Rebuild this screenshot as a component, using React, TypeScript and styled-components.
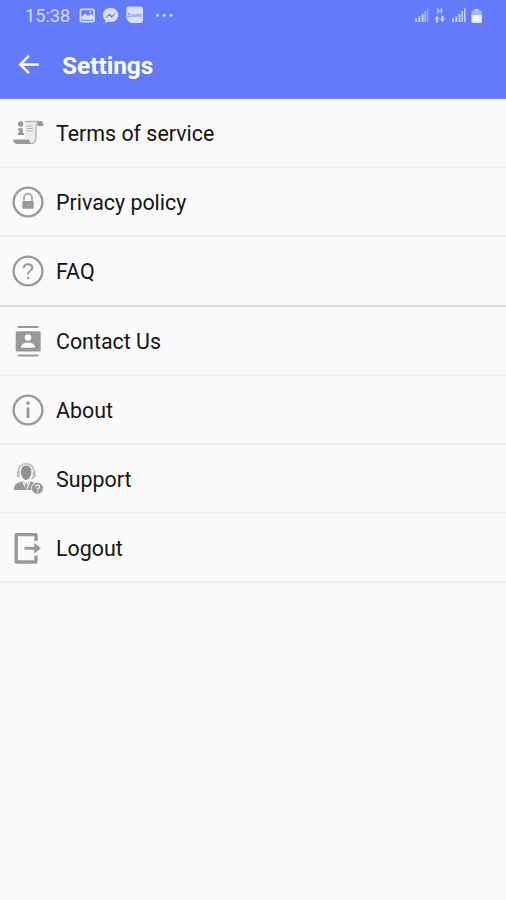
import React from "react";
import styled, { createGlobalStyle } from "styled-components";

const GlobalStyle = createGlobalStyle`
  * { box-sizing: border-box; }
  body { margin: 0; background: #fafafa; font-family: Roboto, "Liberation Sans", sans-serif; }
`;

const Screen = styled.div`
  width: 100%;
  height: 900px;
  background: #fafafa;
  overflow: hidden;
`;

const Header = styled.header`
  height: 99px;
  background: #637bfa;
  border-bottom: 1px solid #7f90e6;
`;

const StatusBar = styled.div`
  height: 32px;
  padding: 0 22px 0 25px;
  display: flex;
  justify-content: space-between;
  color: #d0d8ff;
`;

const StatusGroup = styled.div`
  display: flex;
  align-items: center;
`;

const Clock = styled.span`
  width: 53px;
  font-size: 18.2px;
  line-height: 32px;
`;

const TitleBar = styled.div`
  height: 66px;
  padding-left: 16px;
  display: flex;
  align-items: center;
`;

const BackButton = styled.button`
  width: 46px;
  height: 28px;
  padding: 0;
  border: 0;
  background: none;
  display: flex;
  align-items: center;
`;

const Title = styled.h1`
  margin: 0;
  padding-top: 2px;
  color: #fff;
  font-size: 24.4px;
  font-weight: 700;
  line-height: 28px;
`;

const List = styled.ul`
  margin: 0;
  padding: 0;
  list-style: none;
`;

const Row = styled.li<{ $strong?: boolean }>`
  height: ${(p) => (p.$strong ? 70 : 69)}px;
  padding-left: 11px;
  display: flex;
  align-items: center;
  border-bottom: ${(p) => (p.$strong ? "2px solid #dcdcdc" : "2px solid #eeeeee")};
  color: #141414;
  font-size: 21.4px;
`;

const IconBox = styled.span`
  width: 45px;
  height: 34px;
  display: flex;
  color: #999;
`;

const Label = styled.span`
  line-height: 30px;
  padding-top: 2px;
  white-space: nowrap;
`;

const Glyph = ({ children }: { children: React.ReactNode }) => (
  <svg width="34" height="34" viewBox="0 0 34 34" fill="none" stroke="currentColor" strokeWidth="2.3">
    {children}
  </svg>
);

const TermsIcon = () => (
  <Glyph>
    <path d="M14 5.5H29Q25.5 6.5 25.5 11V23Q25 27.5 21 27.5Q19 27 18.5 23.5H14Z" fill="#ededed" stroke="none" />
    <g stroke="#b4b4b4" strokeWidth="1.4">
      <path d="M14 5.5H28Q25 7 25 12V22Q24.5 27.5 21 27.5" />
      <path d="M15.5 10H22M15.5 12.5H22M15.5 15H22" strokeWidth="1.1" />
    </g>
    <path d="M27.5 5H30Q32.5 5.5 32.5 10H26.5Q26 6.5 27.5 5Z" fill="currentColor" stroke="none" />
    <path d="M2 23.5H18Q18.5 26.5 21 28H6Q2.5 27.5 2 23.5Z" fill="currentColor" stroke="none" />
    <circle cx="9.7" cy="8" r="2.7" fill="currentColor" stroke="none" />
    <path d="M7 12.2H11.8V17H13V19H7V17H8.2V14H7Z" fill="currentColor" stroke="none" />
  </Glyph>
);

const PrivacyIcon = () => (
  <Glyph>
    <circle cx="17" cy="17" r="14.4" />
    <path d="M13 15.5V12.8A4 4 0 0 1 21 12.8V16" strokeWidth="1.9" stroke="#adadad" />
    <rect x="11.3" y="16" width="11.4" height="7.8" rx="0.8" fill="currentColor" stroke="none" />
  </Glyph>
);

const FaqIcon = () => (
  <Glyph>
    <circle cx="17" cy="17" r="14.4" />
    <path d="M12.7 14.2Q12.9 10.2 17 10.2Q21.3 10.2 21.3 13.7Q21.3 15.5 19 17Q17 18.3 17 20.6" strokeWidth="2" />
    <circle cx="17" cy="24" r="1.3" fill="currentColor" stroke="none" />
  </Glyph>
);

const ContactIcon = () => (
  <Glyph>
    <path d="M6.8 3H27.5M6.8 31.5H27.5" strokeWidth="2.2" />
    <rect x="4.7" y="7.2" width="25" height="20.4" rx="1.6" fill="currentColor" stroke="none" />
    <circle cx="17" cy="13.5" r="3.3" fill="#fafafa" stroke="none" />
    <path d="M10 23.8V22Q12 18.6 17 18.6Q22 18.6 24 22V23.8Z" fill="#fafafa" stroke="none" />
  </Glyph>
);

const AboutIcon = () => (
  <Glyph>
    <circle cx="17" cy="17" r="14.4" />
    <path d="M17 14.4V25" strokeWidth="2.8" />
    <circle cx="17" cy="10" r="1.8" fill="currentColor" stroke="none" />
  </Glyph>
);

const SupportIcon = () => (
  <Glyph>
    <path d="M7.2 13V9.5Q8.5 1.8 15.2 1.8Q22 1.8 23.2 9.5V13Q23.2 16 20.5 17" stroke="#bcbcbc" strokeWidth="1.5" />
    <rect x="5.8" y="9" width="3" height="6.3" rx="1.4" fill="#bcbcbc" stroke="none" />
    <rect x="21.7" y="9" width="3" height="6.3" rx="1.4" fill="#bcbcbc" stroke="none" />
    <path d="M10 8Q11.2 3.6 15.2 3.6Q19.4 3.6 20.3 8V12Q18.6 17.6 15.2 17.9Q11.6 17.5 10 12Z" fill="#929292" stroke="none" />
    <path d="M3 28Q2.8 22.4 6.4 21.3L10.8 19.3L15.4 28Z" fill="currentColor" stroke="none" />
    <path d="M16 28L19.7 19.3L24.3 21.3L23 28Z" fill="currentColor" stroke="none" />
    <path d="M12 19.2L15.2 24L18.5 19.2" stroke="#cfcfcf" strokeWidth="1.2" />
    <path d="M15.2 21L16.4 23L15.6 28H14.6L14 23Z" fill="currentColor" stroke="none" />
    <circle cx="26.4" cy="26.2" r="6" fill="currentColor" stroke="#fafafa" strokeWidth="0.8" />
    <path d="M24.4 24.8Q24.6 22.8 26.6 22.8Q28.7 23 28.5 24.8Q28.2 26 26.6 27V28.2" stroke="#f2f2f2" strokeWidth="1.3" />
    <circle cx="26.5" cy="30" r="0.8" fill="#f2f2f2" stroke="none" />
  </Glyph>
);

const LogoutIcon = () => (
  <Glyph>
    <path d="M25 10V3.6H5.2V31H25V24.6" strokeWidth="3.4" strokeLinejoin="round" />
    <path d="M13.5 17.3H25" strokeWidth="2.8" />
    <path d="M23.2 12L30 17.3L23.2 22.6Z" fill="currentColor" stroke="none" />
  </Glyph>
);

const BackArrow = () => (
  <svg width="26" height="26" viewBox="0 0 26 26" fill="none" stroke="#fff" strokeWidth="2.4">
    <path d="M22.8 12.5H4.5M13 3.8L4.2 12.5L13 21.2" />
  </svg>
);

const NotificationIcons = () => (
  <svg width="98" height="32" viewBox="0 0 98 32" fill="#d9e0ff">
    <rect x="2.4" y="9.4" width="13.6" height="12.3" rx="1.5" fill="none" stroke="#d9e0ff" strokeWidth="1.7" />
    <path d="M3.5 19.8V16.8L7.2 13.4L10.2 16L12.7 13.6L15.2 16V19.8Z" />
    <circle cx="12.3" cy="12" r="1" />
    <path d="M32.6 8C37.2 8 40.2 11 40.2 15C40.2 19.2 37 22 32.6 22Q31.3 22 30.2 21.6L27.4 23V20.4Q25 18.3 25 15C25 11 28 8 32.6 8Z" />
    <path d="M28 17.4L31.4 13.8L33.8 16L37.2 13.6L33.8 17.6L31.4 15.4Z" fill="#637bfa" stroke="#637bfa" strokeWidth="0.6" />
    <path d="M50 6.5H62Q65 6.5 65 9.5V20Q65 23 62 23H53Q49 21.5 48.3 17V9Q48.5 6.5 50 6.5Z" />
    <text x="56.6" y="16.8" textAnchor="middle" fontFamily="Roboto, sans-serif" fontSize="5.8" fontWeight="700" fill="#8798ee">Zoom</text>
    <circle cx="79.5" cy="15.2" r="1.5" />
    <circle cx="86.2" cy="15.2" r="1.5" />
    <circle cx="93" cy="15.2" r="1.5" />
  </svg>
);

const SystemIcons = () => (
  <svg width="70" height="32" viewBox="0 0 70 32" fill="#c5cfff">
    <path d="M1 18.5H3V22H1ZM4.3 16.5H6.3V22H4.3ZM7.6 14H9.6V22H7.6Z" />
    <path d="M10.2 11H12V22H10.2ZM12.8 8.5H14.2V22H12.8Z" opacity="0.65" />
    <path d="M23.8 8V13.5M27.5 8V13.5M23.8 10.8H27.5" stroke="#c5cfff" strokeWidth="1.3" fill="none" />
    <path d="M23 15.5L25.4 19.2H24.1V22.5H21.9V19.2H20.6ZM28.5 22.5L26.1 18.8H27.4V15.7H29.6V18.8H30.9Z" />
    <path d="M38 18.5H40V22H38ZM41.3 16.5H43.3V22H41.3ZM44.6 14H46.6V22H44.6ZM47.6 11H49V22H47.6ZM50 8.5H51.6V22H50Z" />
    <path d="M60.3 9H65V11H60.3Z" />
    <rect x="57.6" y="10.7" width="10.2" height="12" rx="1.3" opacity="0.7" />
    <path d="M57.6 15H67.8V21.5Q67.8 22.7 66.6 22.7H58.8Q57.6 22.7 57.6 21.5Z" fill="#eef1ff" />
  </svg>
);

const items = [
  { label: "Terms of service", Icon: TermsIcon },
  { label: "Privacy policy", Icon: PrivacyIcon },
  { label: "FAQ", Icon: FaqIcon, strong: true },
  { label: "Contact Us", Icon: ContactIcon },
  { label: "About", Icon: AboutIcon },
  { label: "Support", Icon: SupportIcon },
  { label: "Logout", Icon: LogoutIcon },
];

export default function App() {
  return (
    <Screen>
      <GlobalStyle />
      <Header>
        <StatusBar>
          <StatusGroup>
            <Clock>15:38</Clock>
            <NotificationIcons />
          </StatusGroup>
          <StatusGroup>
            <SystemIcons />
          </StatusGroup>
        </StatusBar>
        <TitleBar>
          <BackButton aria-label="Back">
            <BackArrow />
          </BackButton>
          <Title>Settings</Title>
        </TitleBar>
      </Header>
      <List>
        {items.map(({ label, Icon, strong }) => (
          <Row key={label} $strong={strong}>
            <IconBox>
              <Icon />
            </IconBox>
            <Label>{label}</Label>
          </Row>
        ))}
      </List>
    </Screen>
  );
}
